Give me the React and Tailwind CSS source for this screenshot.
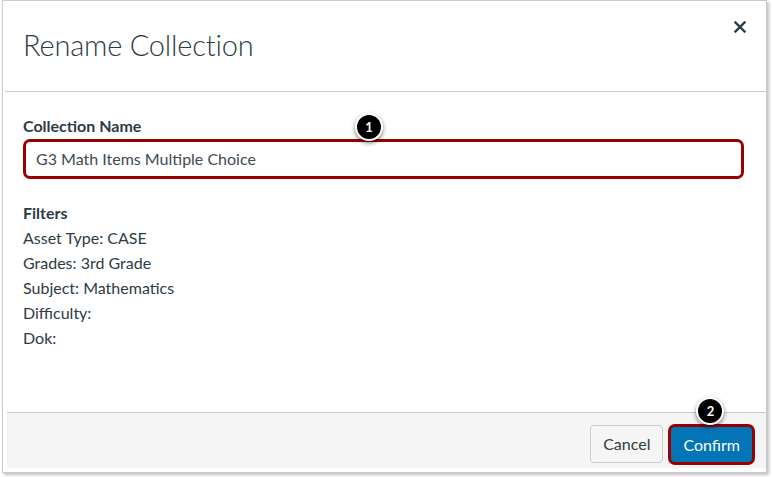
import React from 'react'

const filters = ['Asset Type: CASE', 'Grades: 3rd Grade', 'Subject: Mathematics', 'Difficulty:', 'Dok:'];

const Badge = ({ n, className }) => (
  <div className={`absolute w-[28px] h-[28px] rounded-full bg-black border-2 border-white shadow-[0_2px_4px_rgba(0,0,0,0.5)] flex items-center justify-center text-white text-[13px] font-bold leading-none ${className}`}>
    {n}
  </div>
);

const App = () => {
  return (
    <div className='w-[773px] h-[477px] bg-white font-["Lato","Liberation_Sans",sans-serif] text-[#2d3b45]'>
      <div className='ml-[2px] w-[765px] h-[473px] border border-[#cbcbcb] shadow-[2px_2px_3px_rgba(0,0,0,0.25)] bg-white flex flex-col'>
        <div className='h-[91px] shrink-0 border-b border-[#c7cdd1] ml-[2px] flex items-start justify-between'>
          <h1 className='pl-[18px] pt-[28px] text-[29px] font-light leading-[32px] tracking-[-0.2px]'>Rename Collection</h1>
          <button className='mr-[20px] mt-[20px] leading-none'>
            <svg width='12' height='12' viewBox='0 0 12 12'>
              <path d='M1.5 1.5 L10.5 10.5 M10.5 1.5 L1.5 10.5' stroke='#2d3b45' strokeWidth='2.4' strokeLinecap='square' />
            </svg>
          </button>
        </div>
        <div className='flex-1 px-[20px] pt-[25px] relative'>
          <label className='block text-[16px] font-bold leading-[18px]'>Collection Name</label>
          <div className='relative mt-[4px] w-[721px] h-[40px] rounded-[7px] border-[3px] border-[#9b0000] flex items-center pl-[10px] text-[16px] text-[#3d4b55]'>
            G3 Math Items Multiple Choice
            <Badge n='1' className='left-[329px] -top-[29px]' />
          </div>
          <div className='mt-[21px] text-[16px] leading-[25px]'>
            <div className='font-bold'>Filters</div>
            {filters.map(f => <div key={f}>{f}</div>)}
          </div>
        </div>
        <div className='h-[56px] shrink-0 ml-[4px] bg-[#f5f5f5] border-t border-[#c7cdd1] flex items-start justify-end pt-[11px] pr-[11px] gap-[5px] mb-[4px]'>
          <button className='mt-[1px] h-[38px] px-[12px] rounded-[4px] border border-[#c7cdd1] bg-[#f5f5f5] text-[16px] text-[#2d3b45]'>Cancel</button>
          <div className='relative'>
            <button className='h-[41px] px-[12px] rounded-[7px] border-[3px] border-[#9b0000] bg-[#0374b5] text-[16px] text-white'>Confirm</button>
            <Badge n='2' className='left-[28px] -top-[27px]' />
          </div>
        </div>
      </div>
    </div>
  )
}

export default App;
